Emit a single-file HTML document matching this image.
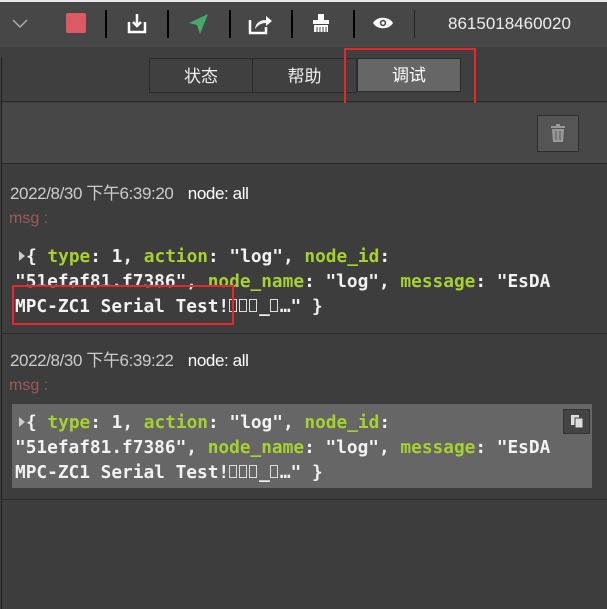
<!DOCTYPE html>
<html><head><meta charset="utf-8"><style>
*{margin:0;padding:0;box-sizing:border-box}
body{width:607px;height:609px;background:#3d3d3d;overflow:hidden;position:relative;font-family:"Liberation Sans","Noto Sans CJK SC",sans-serif}
.abs{position:absolute}
.mono{font-family:"DejaVu Sans Mono","Liberation Mono",monospace;font-size:17.8px;color:#f2f2f2;letter-spacing:0;font-weight:bold}
.k{color:#a6d12e}
.sep{position:absolute;top:10px;width:2px;height:28px;background:#000}
.bx{display:inline-block;width:8px;height:13px;border:1px solid #ddd;margin-right:2px}
</style></head><body>
<div class="abs" style="left:0;top:0;width:607px;height:2px;background:#e8e8e8"></div>
<div class="abs" style="left:0;top:2px;width:607px;height:45px;background:#474747"></div>
<svg class="abs" style="left:10px;top:16px" width="20" height="14"><path d="M3 4 L10 11 L17 4" stroke="#aaa" stroke-width="1.5" fill="none"/></svg>
<div class="abs" style="left:66px;top:13px;width:20px;height:20px;background:#dc5a63;border-radius:2px"></div>
<div class="sep" style="left:105px"></div>
<svg class="abs" style="left:126px;top:12px" width="22" height="24"><path d="M3 10 V20 H19 V10" stroke="#fff" stroke-width="2.5" fill="none"/><path d="M11 2 V14 M7 10 L11 14 L15 10" stroke="#fff" stroke-width="2.5" fill="none"/></svg>
<div class="sep" style="left:167px"></div>
<svg class="abs" style="left:187px;top:13px" width="24" height="22"><path d="M21 1 L2 10 L10 12 L13 21 Z" fill="#48a868"/></svg>
<div class="sep" style="left:229px"></div>
<svg class="abs" style="left:247px;top:12px" width="26" height="24"><path d="M3 8 V21 H19 V15" stroke="#fff" stroke-width="2.5" fill="none"/><path d="M8 17 C9 10 14 8 19 8 V4 L25 9 L19 14 V11 C14 11 11 13 8 17Z" fill="#fff"/></svg>
<div class="sep" style="left:291px"></div>
<svg class="abs" style="left:312px;top:14px" width="18" height="20"><rect x="6" y="0" width="6" height="6" fill="#fff"/><rect x="1" y="6" width="16" height="4" fill="#fff"/><rect x="2" y="11" width="14" height="7" fill="#fff"/><path d="M5 13 V18 M8 13 V18 M11 13 V18 M14 13 V18" stroke="#474747" stroke-width="1"/></svg>
<div class="sep" style="left:353px"></div>
<svg class="abs" style="left:372px;top:16px" width="22" height="14"><path d="M1 7 C5 0 17 0 21 7 C17 14 5 14 1 7Z" fill="#fff"/><circle cx="11" cy="7" r="3.2" fill="#474747"/><circle cx="11" cy="7" r="1.6" fill="#fff"/></svg>
<div class="sep" style="left:414px;width:1px;background:#222"></div>
<div class="abs" style="left:448px;top:14px;font-size:17px;color:#eee">8615018460020</div>

<div class="abs" style="left:0;top:47px;width:607px;height:55px;background:#3f3f3f;border-bottom:1px solid #2a2a2a"></div>
<div class="abs" style="left:1px;top:57px;width:1px;height:552px;background:#222"></div>
<div class="abs" style="left:149px;top:58px;width:104px;height:35px;background:#404040;border:1px solid #2b2b2b;color:#eee;font-size:17px;text-align:center;line-height:35px">状态</div>
<div class="abs" style="left:252px;top:58px;width:105px;height:35px;background:#404040;border:1px solid #2b2b2b;color:#eee;font-size:17px;text-align:center;line-height:35px">帮助</div>
<div class="abs" style="left:357px;top:58px;width:104px;height:34px;background:#666;border:1px solid #2b2b2b;color:#fff;font-size:17px;text-align:center;line-height:34px">调试</div>
<div class="abs" style="left:344px;top:48px;width:132px;height:63px;border:2px solid #e8262c"></div>

<div class="abs" style="left:2px;top:103px;width:605px;height:61px;background:#474747;border-bottom:1px solid #2a2a2a"></div>
<div class="abs" style="left:537px;top:115px;width:42px;height:37px;background:#555;border:1px solid #2e2e2e"></div>
<svg class="abs" style="left:550px;top:123px" width="16" height="20"><rect x="1" y="3" width="14" height="2" fill="#999"/><rect x="6" y="1" width="4" height="2" fill="#999"/><path d="M2 6 H14 L13 19 H3Z" fill="#999"/><path d="M6 8 V17 M10 8 V17" stroke="#555" stroke-width="1"/></svg>

<div class="abs" style="left:10px;top:179px;font-size:17px;color:#ccc;letter-spacing:-0.4px">2022/8/30 下午6:39:20 <span style="color:#fff;margin-left:10px">node: all</span></div>
<div class="abs" style="left:9px;top:210px;font-size:16px;color:#9c5a5a">msg :</div>
<div class="abs mono" style="left:15px;top:244px;line-height:25px;white-space:pre"><svg width="11" height="14" style="vertical-align:-1px"><path d="M4 2 L10 7 L4 12Z" fill="#ccc"/></svg>{ <span class="k">type</span>: 1, <span class="k">action</span>: "log", <span class="k">node_id</span>:
"51efaf81.f7386", <span class="k">node_name</span>: "log", <span class="k">message</span>: "EsDA
MPC-ZC1 Serial Test!<span class="bx"></span><span class="bx"></span><span class="bx"></span>_<span class="bx"></span>…" }</div>
<div class="abs" style="left:12px;top:285px;width:222px;height:40px;border:2px solid #e8262c"></div>
<div class="abs" style="left:2px;top:333px;width:605px;height:1px;background:#2a2a2a"></div>

<div class="abs" style="left:10px;top:346px;font-size:17px;color:#ccc;letter-spacing:-0.4px">2022/8/30 下午6:39:22 <span style="color:#fff;margin-left:10px">node: all</span></div>
<div class="abs" style="left:9px;top:377px;font-size:16px;color:#9c5a5a">msg :</div>
<div class="abs" style="left:12px;top:404px;width:580px;height:84px;background:#666"></div>
<div class="abs" style="left:563px;top:409px;width:27px;height:25px;background:#444;border:1px solid #333"></div>
<svg class="abs" style="left:570px;top:414px" width="14" height="15"><rect x="1" y="1" width="8" height="10" fill="#ddd"/><rect x="5" y="4" width="8" height="10" fill="#ddd" stroke="#444"/></svg>
<div class="abs mono" style="left:15px;top:410px;line-height:25px;white-space:pre"><svg width="11" height="14" style="vertical-align:-1px"><path d="M4 2 L10 7 L4 12Z" fill="#ccc"/></svg>{ <span class="k">type</span>: 1, <span class="k">action</span>: "log", <span class="k">node_id</span>:
"51efaf81.f7386", <span class="k">node_name</span>: "log", <span class="k">message</span>: "EsDA
MPC-ZC1 Serial Test!<span class="bx"></span><span class="bx"></span><span class="bx"></span>_<span class="bx"></span>…" }</div>
<div class="abs" style="left:2px;top:499px;width:605px;height:1px;background:#2a2a2a"></div>
</body></html>
